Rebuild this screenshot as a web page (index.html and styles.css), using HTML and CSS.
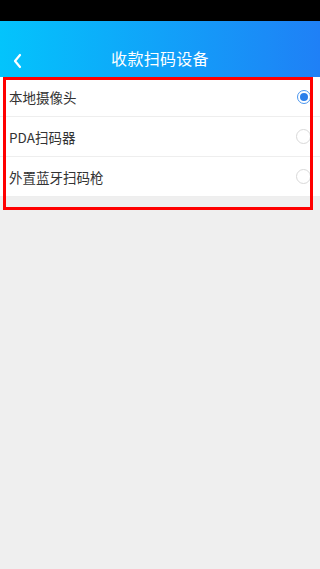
FILE: index.html
```html
<!DOCTYPE html>
<html lang="zh-CN">
<head>
    <meta charset="UTF-8">
    <meta name="viewport" content="width=device-width, initial-scale=1.0">
    <title>收款扫码设备</title>
    <link rel="stylesheet" href="styles.css">
</head>
<body>
    <div class="status-bar"></div>

    <div class="header">
        <a href="#" class="back">
            <svg width="12" height="16" viewBox="0 0 12 16">
                <path d="M8 2 L3 8 L8 14" fill="none" stroke="#fff" stroke-width="2.2" stroke-linecap="round" stroke-linejoin="round"/>
            </svg>
        </a>
        <h1>收款扫码设备</h1>
    </div>

    <div class="device-list">
        <div class="device-item">
            <span>本地摄像头</span>
            <span class="radio checked"></span>
        </div>
        <div class="device-item">
            <span>PDA扫码器</span>
            <span class="radio"></span>
        </div>
        <div class="device-item">
            <span>外置蓝牙扫码枪</span>
            <span class="radio"></span>
        </div>
        <div class="highlight"></div>
    </div>
</body>
</html>
```

FILE: styles.css
```css
body {
    font-family: "Noto Sans CJK SC", "Noto Sans", sans-serif;
    background-color: #efefef;
    margin: 0;
    padding: 0;
}

.status-bar {
    height: 21px;
    background-color: #000;
}

/* Header */
.header {
    height: 56px;
    padding-top: 18px;
    box-sizing: border-box;
    background: linear-gradient(to right, #03c4fc, #1f80f6);
    display: flex;
    align-items: center;
    justify-content: center;
    position: relative;
}

.header h1 {
    margin: 0;
    color: #fff;
    font-size: 16px;
    font-weight: normal;
    letter-spacing: 0.3px;
}

.header .back {
    position: absolute;
    left: 12px;
    top: 32px;
    display: flex;
}

/* Device list */
.device-list {
    position: relative;
    padding-bottom: 13px;
}

.device-item {
    height: 39px;
    background-color: #fff;
    border-bottom: 1px solid #eeeeee;
    display: flex;
    align-items: center;
    justify-content: space-between;
    padding: 0 9px 0 9px;
    font-size: 13.5px;
    color: #333;
}

.device-item:last-of-type {
    border-bottom: none;
    height: 40px;
}

.radio {
    width: 13px;
    height: 13px;
    border: 1px solid #d9d9d9;
    border-radius: 50%;
    box-sizing: content-box;
    position: relative;
}

.radio.checked {
    border: 1.5px solid #4a96ef;
    width: 12px;
    height: 12px;
}

.radio.checked::after {
    content: "";
    position: absolute;
    left: 2px;
    top: 2px;
    width: 8px;
    height: 8px;
    border-radius: 50%;
    background-color: #2b7fea;
}

/* red marker box drawn over the list */
.highlight {
    position: absolute;
    left: 3px;
    top: 0;
    width: 304px;
    height: 127px;
    border: 3px solid #ff0000;
}
```
